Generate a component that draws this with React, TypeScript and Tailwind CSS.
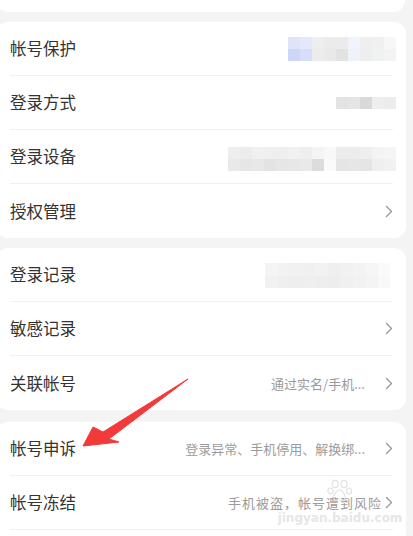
import React from 'react';

const FONT = { fontFamily: '"Noto Sans CJK SC", "Noto Sans", sans-serif' };

const Chevron = () => (
  <svg width="8" height="13" viewBox="0 0 8 13" className="shrink-0">
    <path d="M1.5 1.5 L6.5 6.5 L1.5 11.5" fill="none" stroke="#9a9a9a" strokeWidth="1.4" strokeLinecap="round" strokeLinejoin="round" />
  </svg>
);

// pixelated (mosaic) blocks hiding private values
const Mosaic = ({ rows, size = 12 }: { rows: string[][]; size?: number }) => (
  <div className="flex flex-col">
    {rows.map((r, i) => (
      <div key={i} className="flex">
        {r.map((c, j) => (
          <div key={j} style={{ width: size, height: size, background: c }} />
        ))}
      </div>
    ))}
  </div>
);

const Row = ({
  label,
  children,
  last,
}: {
  label: string;
  children?: React.ReactNode;
  last?: boolean;
}) => (
  <div
    className={`flex items-center justify-between h-[54px] ${
      last ? '' : 'border-b border-[#f0f0f0]'
    }`}
  >
    <span className="text-[16.5px] text-[#333333] leading-none">{label}</span>
    <div className="flex items-center">{children}</div>
  </div>
);

const Hint = ({ text, gap = 'mr-[20px]' }: { text: string; gap?: string }) => (
  <>
    <span className={`text-[13px] text-[#9b9b9b] leading-none ${gap}`}>{text}</span>
    <Chevron />
  </>
);

const Card = ({ children, className = '' }: { children: React.ReactNode; className?: string }) => (
  <div className={`-ml-1 w-[410px] bg-white rounded-[12px] pl-[14px] pr-[13px] ${className}`}>{children}</div>
);

export default function App() {
  return (
    <div className="relative w-[413px] h-[536px] overflow-hidden bg-[#f4f4f4]" style={FONT}>
      <div className="flex flex-col">
        <div className="-ml-1 w-[409px] h-[12px] bg-white rounded-b-[12px]" />

        <Card className="mt-[10px]">
          <Row label="帐号保护">
            <div className="-mr-[3px]">
              <Mosaic
                rows={[
                  ['#dfe4fb', '#e4e8fa', '#eeeeee', '#ebebeb', '#ebebeb', '#f1f4fd', '#efefef', '#f0f0f0', '#f7f7f7'],
                  ['#ccd6f7', '#d8defa', '#ececec', '#e9e9e9', '#e2e2e2', '#eef2fc', '#eeeeee', '#f0f1f1', '#f3f3f3'],
                ]}
              />
            </div>
          </Row>
          <Row label="登录方式">
            <div className="-mr-[3px]">
              <Mosaic rows={[['#e3e3e3', '#e5e5e5', '#d9d9d9', '#eeeeee', '#ececec']]} />
            </div>
          </Row>
          <Row label="登录设备">
            <div className="-mr-[3px] mt-[4px]">
              <Mosaic
                rows={[
                  ['#eeeeee', '#ececec', '#f0f0f0', '#efefef', '#eeeeee', '#f1f1f1', '#eeeeee', '#f4f4f4', '#f8f8f8', '#ececec', '#ececec', '#eeeeee', '#f3f3f3', '#f5f5f5'],
                  ['#e9e9e9', '#e6e6e6', '#e8e8e8', '#e3e3e3', '#e6e6e6', '#e7e7e7', '#e9e9e9', '#dcdcdc', '#fafafa', '#e5e5e5', '#e6e6e6', '#e5e5e5', '#efefef', '#f1f1f1'],
                ]}
              />
            </div>
          </Row>
          <Row label="授权管理" last>
            <Chevron />
          </Row>
        </Card>

        <Card className="mt-[10px]">
          <Row label="登录记录">
            <div className="mr-[3px] mt-[2px]">
              <Mosaic
                size={12.5}
                rows={[
                  ['#f4f4f4', '#f2f2f2', '#f1f1f1', '#f0f0f0', '#f2f2f2', '#efefef', '#f1f1f1', '#f3f3f3', '#f6f6f6', '#fafafa'],
                  ['#f1f1f1', '#efefef', '#eeeeee', '#efefef', '#eeeeee', '#ededed', '#f0f0f0', '#f2f2f2', '#f4f4f4', '#f8f8f8'],
                ]}
              />
            </div>
          </Row>
          <Row label="敏感记录">
            <Chevron />
          </Row>
          <Row label="关联帐号" last>
            <Hint text="通过实名/手机..." />
          </Row>
        </Card>

        <Card className="mt-[12px]">
          <Row label="帐号申诉">
            <Hint text="登录异常、手机停用、解换绑..." />
          </Row>
          <Row label="帐号冻结">
            <Hint text="手机被盗，帐号遭到风险" gap="mr-[3px] text-[13.5px] tracking-[1px]" />
          </Row>
          <Row label="" last />
        </Card>
      </div>

      {/* red annotation arrow */}
      <svg className="absolute inset-0 pointer-events-none" width="413" height="536">
        <polygon
          points="83,446 93,427 103,432 188,379 109,439 119,442"
          fill="#f23a3a"
          stroke="#f23a3a"
          strokeWidth="1"
          strokeLinejoin="round"
        />
      </svg>

      {/* watermark */}
      <div className="absolute left-[292px] top-[478px] w-[96px] flex flex-col items-center pointer-events-none">
        <svg width="26" height="26" viewBox="0 0 26 26">
          <g fill="none" stroke="#e2e2e2" strokeWidth="1.2">
            <ellipse cx="8" cy="6" rx="3" ry="3.6" />
            <ellipse cx="17" cy="6" rx="3" ry="3.6" />
            <ellipse cx="3.5" cy="13" rx="2.6" ry="3" />
            <ellipse cx="22" cy="13" rx="2.6" ry="3" />
            <path d="M12.5 12 C9 12 6 18 7 21 C8 24 11 22 12.5 22 C14 22 17 24 18 21 C19 18 16 12 12.5 12 Z" />
          </g>
        </svg>
        <span className="text-[12px] leading-none mt-[8px] font-bold text-[#e6e6e6]" style={{ fontFamily: '"DejaVu Sans", sans-serif' }}>
          jingyan.baidu.com
        </span>
      </div>
    </div>
  );
}
